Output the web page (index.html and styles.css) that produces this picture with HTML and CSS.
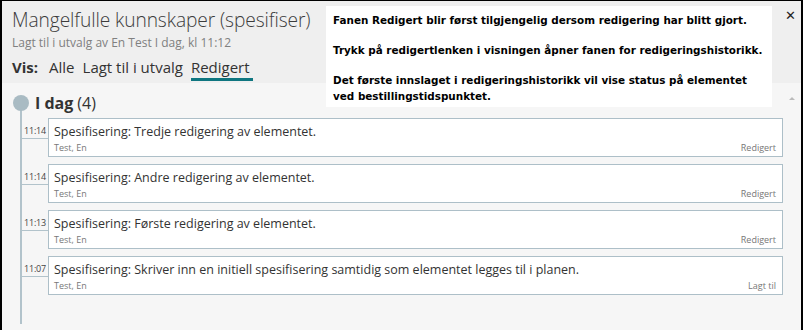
FILE: index.html
```html
<!DOCTYPE html>
<html lang="no">
<head>
<meta charset="utf-8">
<title>Mangelfulle kunnskaper</title>
<link rel="stylesheet" href="styles.css">
</head>
<body>
<div class="frame">
  <header class="header">
    <h1 class="title">Mangelfulle kunnskaper (spesifiser)</h1>
    <div class="subtitle">Lagt til i utvalg av En Test I dag, kl 11:12</div>
    <nav class="tabs">
      <span class="tabs-label">Vis:</span>
      <span class="tab">Alle</span>
      <span class="tab">Lagt til i utvalg</span>
      <span class="tab active">Redigert</span>
    </nav>
  </header>
  <main class="content">
    <div class="day-head">
      <span class="dot"></span>
      <span class="day-name">I dag</span>
      <span class="day-count">(4)</span>
    </div>
    <div class="entries">
      <div class="entry">
        <div class="time">11:14</div>
        <div class="card">
          <div class="card-text">Spesifisering: Tredje redigering av elementet.</div>
          <div class="card-meta"><span>Test, En</span><span>Redigert</span></div>
        </div>
      </div>
      <div class="entry">
        <div class="time">11:14</div>
        <div class="card">
          <div class="card-text">Spesifisering: Andre redigering av elementet.</div>
          <div class="card-meta"><span>Test, En</span><span>Redigert</span></div>
        </div>
      </div>
      <div class="entry">
        <div class="time">11:13</div>
        <div class="card">
          <div class="card-text">Spesifisering: Første redigering av elementet.</div>
          <div class="card-meta"><span>Test, En</span><span>Redigert</span></div>
        </div>
      </div>
      <div class="entry">
        <div class="time">11:07</div>
        <div class="card">
          <div class="card-text">Spesifisering: Skriver inn en initiell spesifisering samtidig som elementet legges til i planen.</div>
          <div class="card-meta"><span>Test, En</span><span>Lagt til</span></div>
        </div>
      </div>
    </div>
  </main>
  <div class="scroll-up"></div>
  <button class="close" aria-label="Lukk">&#x2715;</button>
  <div class="tooltip">
    <p>Fanen Redigert blir først tilgjengelig dersom redigering har blitt gjort.</p>
    <p>Trykk på redigertlenken i visningen åpner fanen for redigeringshistorikk.</p>
    <p>Det første innslaget i redigeringshistorikk vil vise status på elementet ved bestillingstidspunktet.</p>
  </div>
</div>
</body>
</html>
```
FILE: styles.css
```css
* { box-sizing: border-box; }
html, body { margin: 0; padding: 0; background: #ffffff; }
body { width: 804px; height: 330px; overflow: hidden; }

.frame {
  position: relative;
  width: 803px;
  height: 330px;
  border-left: 2px solid #000;
  border-right: 2px solid #000;
  border-top: 1px solid #000;
  background: #f6f6f6;
  font-family: "Open Sans", "Noto Sans", sans-serif;
  color: #333;
}

.header {
  height: 82px;
  background: #efefef;
  padding: 6px 0 0 10px;
}
.title {
  margin: 0;
  font-size: 19.2px;
  font-weight: 300;
  line-height: 26px;
  color: #3c3c3c;
  letter-spacing: -0.1px;
}
.subtitle {
  font-size: 12px;
  line-height: 16px;
  color: #808080;
  margin-top: 2px;
}
.tabs {
  display: flex;
  gap: 8px;
  margin-top: 5px;
  font-size: 15px;
  line-height: 22px;
  color: #333;
}
.tabs-label { font-weight: 700; margin-right: 3px; }
.tab { padding-bottom: 0; }
.tab.active { border-bottom: 3px solid #0f7680; padding-right: 3px; }

.content {
  padding: 10px 0 0 11px;
}
.day-head {
  display: flex;
  align-items: center;
  height: 20px;
}
.dot {
  width: 16px;
  height: 16px;
  border-radius: 50%;
  background: #a9bbc3;
  margin-right: 6px;
}
.day-name { font-size: 16px; font-weight: 700; color: #333; margin-right: 4px; }
.day-count { font-size: 16px; color: #333; }

.entries {
  margin-left: 7px;
  margin-top: -3px;
  border-left: 2px solid #b2c3cb;
  padding-top: 8px;
  height: 214px;
  display: flex;
  flex-direction: column;
  gap: 7px;
}
.entry {
  display: flex;
  align-items: flex-start;
}
.time {
  width: 26px;
  height: 21px;
  border-bottom: 1px solid #b2c3cb;
  font-size: 9px;
  line-height: 12px;
  letter-spacing: -0.2px;
  padding: 7px 0 0 2px;
  color: #444;
}
.card {
  width: 735px;
  height: 39px;
  background: #fff;
  border: 1px solid #adbfc8;
  padding: 4px 6px 0 5px;
}
.card-text {
  font-size: 12.5px;
  line-height: 17px;
  color: #333;
}
.card-meta {
  display: flex;
  justify-content: space-between;
  font-size: 9px;
  line-height: 13px;
  color: #777;
  margin-top: 1px;
}

.scroll-up {
  position: absolute;
  right: 6px;
  top: 96px;
  width: 0;
  height: 0;
  border-left: 3px solid transparent;
  border-right: 3px solid transparent;
  border-bottom: 3px solid #bbb;
}
.close {
  position: absolute;
  right: 5px;
  top: 8px;
  border: 0;
  background: transparent;
  padding: 0;
  font-family: "DejaVu Sans", sans-serif;
  font-size: 13px;
  font-weight: 700;
  color: #222;
  line-height: 14px;
}
.tooltip {
  position: absolute;
  left: 324px;
  top: 5px;
  width: 446px;
  height: 101px;
  background: #fff;
  padding: 6px 8px 0 7px;
  font-family: "DejaVu Sans", Verdana, sans-serif;
  font-size: 10.4px;
  font-weight: 700;
  line-height: 16px;
  color: #000;
}
.tooltip p { margin: 0 0 14px 0; }
.tooltip p:last-child { margin: 0; }
```
